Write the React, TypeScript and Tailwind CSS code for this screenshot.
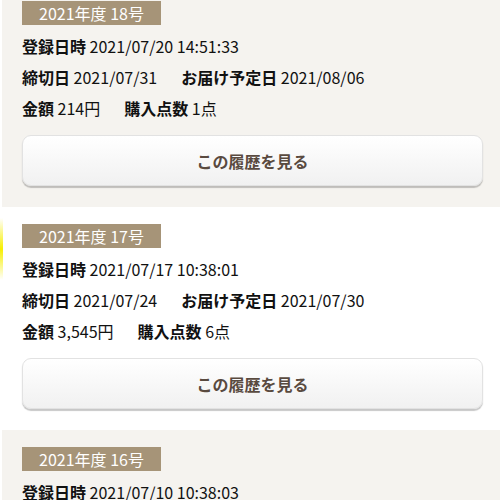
import React from "react";

type Order = {
  title: string;
  registered: string;
  deadline: string;
  delivery: string;
  amount: string;
  count: string;
};

const orders: Order[] = [
  { title: "2021年度 18号", registered: "2021/07/20 14:51:33", deadline: "2021/07/31", delivery: "2021/08/06", amount: "214円", count: "1点" },
  { title: "2021年度 17号", registered: "2021/07/17 10:38:01", deadline: "2021/07/24", delivery: "2021/07/30", amount: "3,545円", count: "6点" },
  { title: "2021年度 16号", registered: "2021/07/10 10:38:03", deadline: "2021/07/17", delivery: "2021/07/23", amount: "1,280円", count: "2点" },
];

const Field: React.FC<{ label: string; value: string; className?: string }> = ({ label, value, className }) => (
  <span className={className}>
    <b className="font-bold">{label}</b> {value}
  </span>
);

const OrderCard: React.FC<{ order: Order; shaded: boolean; first: boolean }> = ({ order, shaded, first }) => (
  <div
    className={
      (shaded ? "bg-[#f5f3ef] ml-[2px] pl-[18px] " : "bg-white pl-[20px] ") +
      (first ? "mt-[-16px] " : "") +
      "pt-[17px] pb-[21px] pr-[17px]"
    }
  >
    <div className="ml-[2px] w-[139px] h-[24px] bg-[#a69478] text-white text-[16px] leading-[24px] text-center mb-[6px]">
      {order.title}
    </div>
    <div className="ml-[2px] text-[16px] leading-[31px] text-[#111]">
      <div>
        <Field label="登録日時" value={order.registered} />
      </div>
      <div>
        <Field label="締切日" value={order.deadline} />
        <Field label="お届け予定日" value={order.delivery} className="ml-6" />
      </div>
      <div>
        <Field label="金額" value={order.amount} />
        <Field label="購入点数" value={order.count} className="ml-6" />
      </div>
    </div>
    <button className="mt-[11px] ml-[2px] w-[461px] h-[51px] rounded-[9px] border border-[#e2e2e2] bg-gradient-to-b from-white to-[#f1f1f1] shadow-[0_2px_1px_rgba(0,0,0,0.22)] text-[16px] font-bold text-[#594a3f]">
      この履歴を見る
    </button>
  </div>
);

export default function App() {
  return (
    <div
      className="relative w-[500px] h-[500px] overflow-hidden bg-white"
      style={{ fontFamily: '"Noto Sans CJK JP", "Noto Sans", sans-serif' }}
    >
      {orders.map((o, i) => (
        <OrderCard key={o.title} order={o} shaded={i % 2 === 0} first={i === 0} />
      ))}
      <div className="absolute left-0 top-[218px] w-[3px] h-[62px] bg-gradient-to-b from-transparent via-[#f7ef00] to-transparent" />
    </div>
  );
}
